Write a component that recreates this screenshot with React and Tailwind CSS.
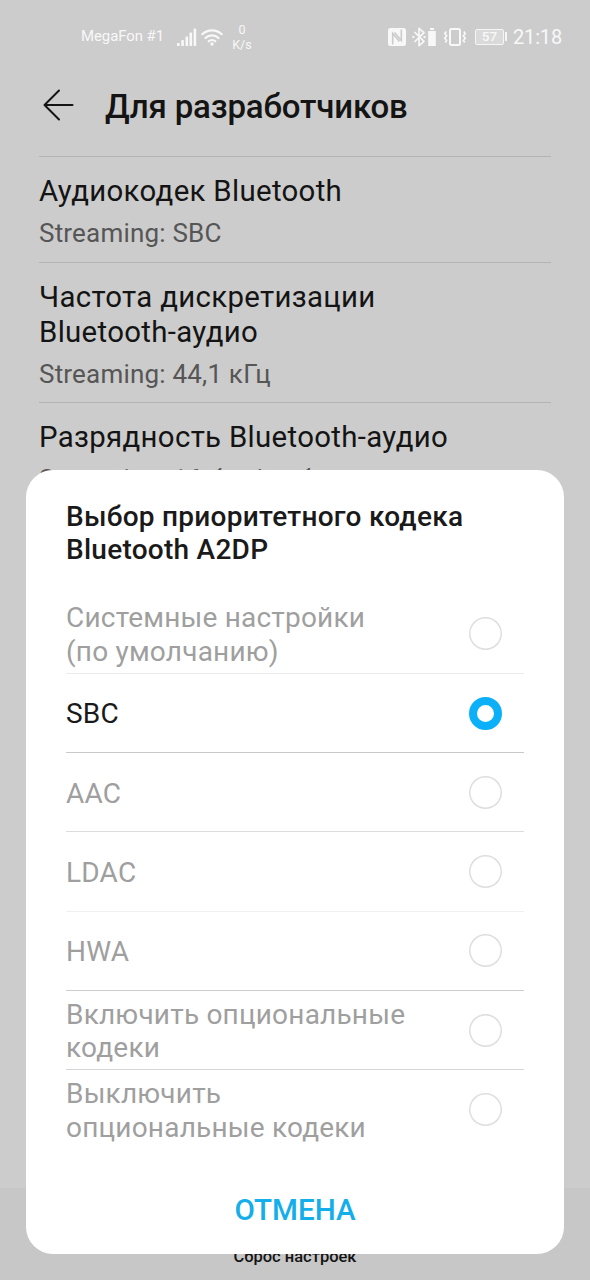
const settings = [
    {
        title: ["Аудиокодек Bluetooth"],
        value: "Streaming: SBC",
        className: "h-[106px]",
    },
    {
        title: ["Частота дискретизации", "Bluetooth-аудио"],
        value: "Streaming: 44,1 кГц",
        className: "h-[140px]",
    },
    {
        title: ["Разрядность Bluetooth-аудио"],
        value: "Streaming: 16 бит/выборка",
        className: "h-[106px]",
    },
];

const codecs = [
    { lines: ["Системные настройки", "(по умолчанию)"], border: "border-[#ebebeb]" },
    { lines: ["SBC"], selected: true, border: "border-[#c9c9c9]" },
    { lines: ["AAC"], border: "border-[#dcdcdc]" },
    { lines: ["LDAC"], border: "border-[#f0f0f0]" },
    { lines: ["HWA"], border: "border-[#cdcdcd]" },
    { lines: ["Включить опциональные", "кодеки"], border: "border-[#d6d6d6]" },
    { lines: ["Выключить", "опциональные кодеки"], border: "border-transparent" },
];

const SignalIcon = () => (
    <svg width="20" height="18" viewBox="0 0 20 18" fill="currentColor">
        <rect x="0" y="15" width="2.6" height="3" rx="0.6" />
        <rect x="4.3" y="12" width="2.6" height="6" rx="0.6" />
        <rect x="8.5" y="8.5" width="2.6" height="9.5" rx="0.6" />
        <rect x="12.5" y="4.5" width="2.6" height="13.5" rx="0.6" />
        <rect x="16.6" y="0.5" width="2.6" height="17.5" rx="0.6" />
    </svg>
);

const WifiIcon = () => (
    <svg width="22" height="18" viewBox="0 0 22 18" fill="none" stroke="currentColor" strokeWidth="2.2" strokeLinecap="round">
        <path d="M1.3 6.2a14 14 0 0 1 19.4 0" />
        <path d="M4.5 10a9.4 9.4 0 0 1 13 0" />
        <path d="M7.7 13.3a4.8 4.8 0 0 1 6.6 0" />
        <circle cx="11" cy="16" r="1.7" fill="currentColor" stroke="none" />
    </svg>
);

const NfcIcon = () => (
    <svg width="18" height="18" viewBox="0 0 18 18" fill="none">
        <rect width="18" height="18" rx="2.5" fill="currentColor" />
        <path d="M4.700 16.500V5.500l6.800 8M13.300 1.500v11L6.500 4.500" stroke="#ccc" strokeWidth="1.6" />
    </svg>
);

const BluetoothIcon = () => (
    <svg width="27" height="20" viewBox="0 0 27 20" fill="none" stroke="currentColor" strokeWidth="1.7">
        <path d="M2.5 5l9.5 9.3-5 4.4V1.3l5 4.4L2.5 15" strokeLinejoin="round" />
        <path d="M.4 10h1.9M11.6 10h1.9" strokeWidth="2" />
        <path d="M16.2 4h7.6v15h-7.6zM18 1h4v2h-4z" fill="currentColor" stroke="none" />
    </svg>
);

const VibrateIcon = () => (
    <svg width="24" height="18" viewBox="0 0 24 18" fill="none" stroke="currentColor" strokeWidth="2">
        <rect x="7" y="1" width="10" height="16" rx="1.5" />
        <path d="M3.2 3.5l-1.4 2 1.8 2.3-1.8 2.4 1.8 2.3-1.4 2M20.8 3.5l1.4 2-1.8 2.3 1.8 2.4-1.8 2.3 1.4 2" strokeWidth="1.7" />
    </svg>
);

const StatusBar = () => (
    <div className="flex h-[72px] items-center pt-px pl-[81px] text-[#f8f8f8]">
        <span className="w-[96px] whitespace-nowrap text-[14.9px] tracking-[-0.03px]">MegaFon #1</span>
        <SignalIcon />
        <span className="ml-1"><WifiIcon /></span>
        <div className="ml-[6px] w-[26px] text-center text-[12.5px] leading-[15px]">
            <div>0</div>
            <div>K/s</div>
        </div>
        <div className="ml-[133px] flex items-center">
            <NfcIcon />
            <span className="ml-[6px]"><BluetoothIcon /></span>
            <span className="ml-[4px]"><VibrateIcon /></span>
            <div className="ml-[8px] flex h-[16px] w-[29px] items-center justify-center rounded-[2px] border border-[#f5f5f5] bg-[#dadada] text-[13.5px] font-medium">57</div>
            <div className="ml-px h-[9px] w-[2px] bg-[#f5f5f5]" />
            <span className="ml-[6px] text-[20px] tracking-[-0.15px]">21:18</span>
        </div>
    </div>
);

const Setting = ({ title, value, className }) => (
    <div className={`mx-[39px] shrink-0 border-t border-[#b3b3b3] pt-[17px] ${className}`}>
        {title.map((line) => (
            <div key={line} className="whitespace-nowrap text-[29.4px] leading-[35px] tracking-[0.32px] text-[#141414]">{line}</div>
        ))}
        <div className="mt-[9px] whitespace-nowrap text-[26px] leading-[30px] tracking-[0.2px] text-[#565656]">{value}</div>
    </div>
);

const Codec = ({ lines, selected, border }) => (
    <label className={`flex h-[79.3px] items-center justify-between border-b pr-[22.5px] ${border}`}>
        <span className={`whitespace-nowrap pt-[2px] text-[28px] leading-[33.3px] tracking-[0.2px] ${selected ? "text-[#1a1a1a]" : "text-[#9f9f9f]"}`}>
            {lines.map((line) => (
                <span key={line} className="block">{line}</span>
            ))}
        </span>
        <span className={`size-[33px] shrink-0 rounded-full ${selected ? "border-8 border-[#0bb0f8]" : "shadow-[inset_0_0_0_1.5px_#dedede]"}`} />
    </label>
);

const CodecDialog = () => (
    <div className="absolute top-[470px] left-[26px] flex h-[784px] w-[538px] flex-col rounded-[27px] bg-white px-[40px] pt-[30px]">
        <h2 className="h-[94.6px] shrink-0 whitespace-nowrap text-[28px] leading-[33.3px] font-medium tracking-[0.26px] text-[#1a1a1a]">
            Выбор приоритетного кодека
            <br />
            Bluetooth A2DP
        </h2>
        {codecs.map((codec) => (
            <Codec key={codec.lines[0]} {...codec} />
        ))}
        <button className="mt-[43px] text-center text-[29.6px] leading-[34px] font-medium text-[#14aeea]">ОТМЕНА</button>
    </div>
);

const App = () => {
    return (
        <div className="relative flex h-[1280px] w-[590px] flex-col overflow-hidden bg-[#cccccc] font-['Roboto',sans-serif]">
            <StatusBar />
            <header className="flex h-[84px] shrink-0 items-center pb-[16px] pl-[43px]">
                <svg className="-mt-[2px]" width="31" height="32" viewBox="0 0 31 32" fill="none" stroke="#141414" strokeWidth="2" strokeLinecap="round" strokeLinejoin="round">
                    <path d="M16 1.5L1.5 16 16 30.5M1.5 16H29.5" />
                </svg>
                <h1 className="ml-[31px] pt-px text-[33px] font-medium tracking-[-0.16px] text-[#141414]">Для разработчиков</h1>
            </header>
            <main className="flex flex-1 flex-col overflow-hidden">
                {settings.map((item) => (
                    <Setting key={item.value} {...item} />
                ))}
            </main>
            <footer className="flex h-[92px] shrink-0 items-end justify-center bg-[#c7c7c7] pb-[13px] text-[16.5px] leading-[20px] font-medium text-[#141414]">
                Сброс настроек
            </footer>

            <CodecDialog />
        </div>
    );
};

export default App;
